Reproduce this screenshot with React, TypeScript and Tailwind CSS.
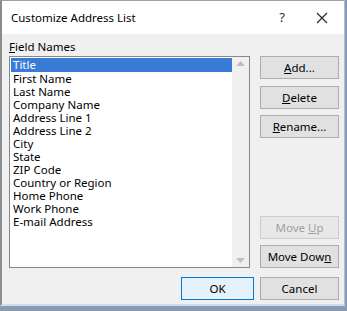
import React from "react";

const fields = [
  "First Name",
  "Last Name",
  "Company Name",
  "Address Line 1",
  "Address Line 2",
  "City",
  "State",
  "ZIP Code",
  "Country or Region",
  "Home Phone",
  "Work Phone",
  "E-mail Address",
];

function Btn({ children, disabled, primary }: { children: React.ReactNode; disabled?: boolean; primary?: boolean }) {
  return (
    <div
      className={
        "w-[79px] h-[23px] flex items-center justify-center text-[11.5px] border " +
        (primary
          ? "border-[#0078d7] bg-[#e5f1fb] text-black"
          : disabled
          ? "border-[#cccccc] bg-[#e8e8e8] text-[#a0a0a0]"
          : "border-[#adadad] bg-[#e1e1e1] text-black")
      }
    >
      <span>{children}</span>
    </div>
  );
}

export default function App() {
  return (
    <div
      className="w-[347px] h-[311px] bg-[#8a9bb0] overflow-hidden"
      style={{ fontFamily: '"Noto Sans", "Open Sans", sans-serif' }}
    >
      <div className="w-[345px] h-[306px] bg-[#f0f0f0] border-l-2 border-t border-r border-b-2 border-l-[#8c8c8c] border-t-[#a0a0a0] border-r-[#9cc4ec] border-b-[#c8e0f4] flex flex-col">
        {/* title bar */}
        <div className="h-[33px] bg-white flex items-center pl-[9px] text-[11.5px] text-black">
          <span className="flex-1">Customize Address List</span>
          <span className="w-[20px] text-center text-[13px] mr-[24px] text-[#333]">?</span>
          <svg width="12" height="12" viewBox="0 0 12 12" className="mr-[16px]">
            <path d="M1 1 L11 11 M11 1 L1 11" stroke="#222" strokeWidth="1.1" />
          </svg>
        </div>
        {/* body */}
        <div className="flex-1 flex flex-col pl-[7px] pr-[5px]">
          <div className="text-[11.5px] text-black mt-[5px] leading-[16px] h-[17px]">
            <span className="underline">F</span>ield Names
          </div>
          <div className="flex gap-[10px]">
            {/* list */}
            <div className="w-[241px] h-[212px] bg-white border border-[#828790] flex">
              <div className="flex-1 flex flex-col text-[11.5px] text-black leading-[13px] pt-[1px] pl-[1px]">
                <div className="h-[14px] bg-[#3a7bd5] text-white pl-[2px] leading-[14px]">Title</div>
                {fields.map((f) => (
                  <div key={f} className="h-[13px] pl-[2px] leading-[13px]">
                    {f}
                  </div>
                ))}
              </div>
              <div className="w-[17px] bg-[#f0f0f0] flex flex-col items-center justify-between py-[4px]">
                <svg width="9" height="5" viewBox="0 0 9 5">
                  <path d="M0 5 L4.5 0 L9 5 Z" fill="#bfbfbf" />
                </svg>
                <svg width="9" height="5" viewBox="0 0 9 5">
                  <path d="M0 0 L4.5 5 L9 0 Z" fill="#bfbfbf" />
                </svg>
              </div>
            </div>
            {/* buttons */}
            <div className="flex flex-col">
              <Btn>
                <span className="underline">A</span>dd...
              </Btn>
              <div className="h-[7px]" />
              <Btn>
                <span className="underline">D</span>elete
              </Btn>
              <div className="h-[6px]" />
              <Btn>
                <span className="underline">R</span>ename...
              </Btn>
              <div className="flex-1" />
              <Btn disabled>
                Move <span className="underline">U</span>p
              </Btn>
              <div className="h-[6px]" />
              <Btn>
                Move Dow<span className="underline">n</span>
              </Btn>
            </div>
          </div>
          <div className="flex justify-end gap-[6px] mt-[9px]">
            <div className="w-[73px]">
              <div className="w-[73px] h-[23px] flex items-center justify-center text-[11.5px] border border-[#0078d7] bg-[#e5f1fb] text-black">
                OK
              </div>
            </div>
            <Btn>Cancel</Btn>
          </div>
        </div>
      </div>
    </div>
  );
}
